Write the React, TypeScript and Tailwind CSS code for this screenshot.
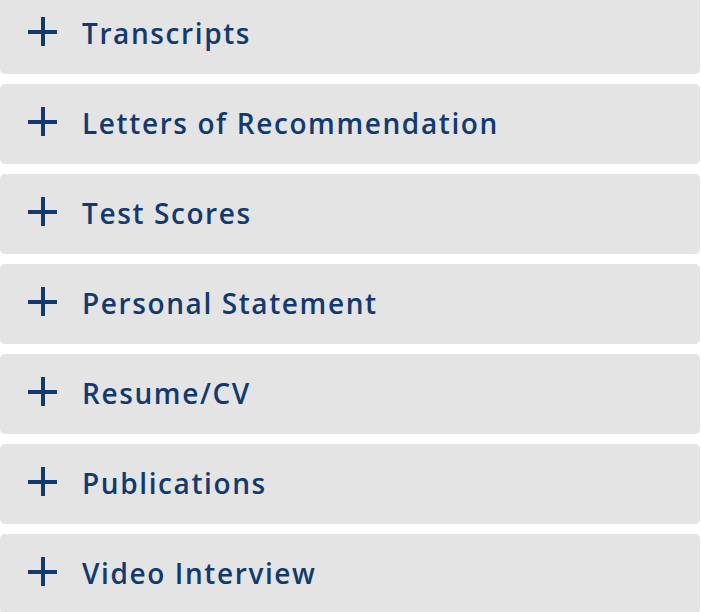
import React from "react";

const items = [
  "Transcripts",
  "Letters of Recommendation",
  "Test Scores",
  "Personal Statement",
  "Resume/CV",
  "Publications",
  "Video Interview",
];

function Plus() {
  return (
    <svg width="29" height="29" viewBox="0 0 29 29" className="shrink-0">
      <rect x="0" y="13" width="29" height="4" fill="#123a6e" />
      <rect x="13" y="0" width="4" height="29" fill="#123a6e" />
    </svg>
  );
}

export default function App() {
  return (
    <div className="bg-white w-[701px] h-[612px] overflow-hidden">
      <div className="-mt-[6px] flex flex-col gap-[10px]">
        {items.map((t) => (
          <div
            key={t}
            className="h-[80px] w-[700px] bg-[#e4e4e4] rounded-[5px] flex items-center pl-[28px] pb-[5px]"
          >
            <Plus />
            <span
              className="ml-[25px] text-[28px] font-semibold text-[#123a6e] tracking-[1.6px] leading-none pt-[2px]"
              style={{ fontFamily: '"Open Sans", sans-serif' }}
            >
              {t}
            </span>
          </div>
        ))}
      </div>
    </div>
  );
}
